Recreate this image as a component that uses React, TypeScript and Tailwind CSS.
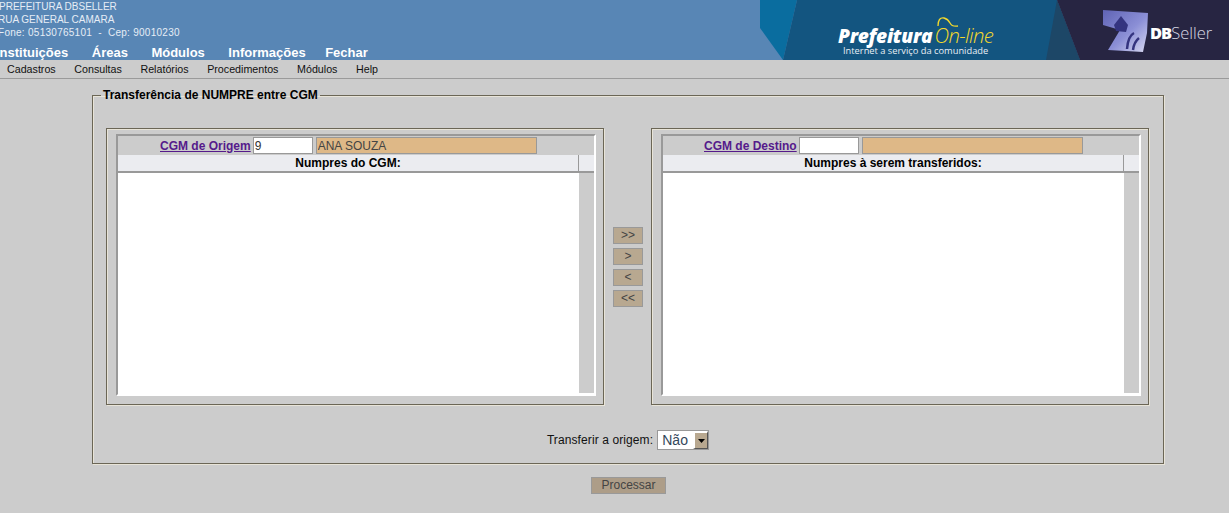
const menuTop = ['Instituições', 'Áreas', 'Módulos', 'Informações'];
const menuSub = ['Cadastros', 'Consultas', 'Relatórios', 'Procedimentos', 'Módulos', 'Help'];
const arrows = ['>>', '>', '<', '<<'];

const Banner = () => (
  <div className="relative w-[469px] h-[60px] shrink-0">
    <svg width="469" height="60" viewBox="0 0 469 60" className="absolute inset-0">
      <defs>
        <linearGradient id="dbIcon" x1="0" y1="0" x2="1" y2="1">
          <stop offset="0" stopColor="#5f63b4" />
          <stop offset="0.55" stopColor="#8b8fd6" />
          <stop offset="1" stopColor="#d9daf2" />
        </linearGradient>
      </defs>
      <polygon points="0,0 37,0 23,60 0,28" fill="#0a6d9f" />
      <polygon points="37,0 297,0 320,60 23,60" fill="#135580" />
      <polygon points="297,0 320,60 286,60" fill="#1d4767" />
      <polygon points="297,0 469,0 469,60 320,60" fill="#272542" />
      {/* DBSeller mark */}
      <polygon points="343,10 388,13 387,33 383,52 348,50 360,30 343,25" fill="url(#dbIcon)" />
      <polygon points="361,16 368,25 366,32 356,31 354,25" fill="#34347f" />
      <path d="M367 49 Q368 36 374 33 M373 50 Q374 42 379 38" stroke="#34347f" strokeWidth="2.5" fill="none" />
      {/* swoosh above the O */}
      <path d="M178 26 Q178 17 184 18 Q188 19 190 23 Q192 27 198 26" stroke="#f3d92c" strokeWidth="1.3" fill="none" />
    </svg>
    <div className="absolute left-[78px] top-[25px] flex items-baseline whitespace-nowrap">
      <span className="font-['Open_Sans',sans-serif] font-extrabold italic text-[19.2px] leading-[20px] text-white tracking-[-0.3px]">Prefeitura</span>
      <span className="ml-[2px] font-['Open_Sans',sans-serif] italic font-light text-[20.3px] leading-[20px] text-[#f3d92c] tracking-[-0.6px]">On-line</span>
    </div>
    <span className="absolute left-[83px] top-[47px] font-['Open_Sans',sans-serif] text-[9.3px] leading-[8px] text-[#e8eef4] whitespace-nowrap">Internet a serviço da comunidade</span>
    <div className="absolute left-[390px] top-[23px] flex font-['Open_Sans',sans-serif] text-[16.5px] leading-[20px] text-white whitespace-nowrap">
      <span className="font-extrabold tracking-[-1px]">DB</span>
      <span className="font-light text-[#d8d8e4]">Seller</span>
    </div>
  </div>
);

const Field = ({ value, name, nameW }: { value: string; name: string; nameW: string }) => (
  <>
    <input
      readOnly
      value={value}
      className="w-[60px] h-[17px] ml-[2px] bg-white border border-[#999] px-[1px] text-[12px] font-['Liberation_Sans',sans-serif] text-[#333] outline-none"
    />
    <input
      readOnly
      value={name}
      className={`${nameW} h-[17px] ml-[3px] bg-[#deb887] border border-[#999] px-[1px] text-[12px] font-['Liberation_Sans',sans-serif] text-[#444] outline-none`}
    />
  </>
);

const Panel = ({
  label,
  labelMl,
  value,
  name,
  nameW,
  title,
}: {
  label: string;
  labelMl: string;
  value: string;
  name: string;
  nameW: string;
  title: string;
}) => (
  <div className="w-[498px] h-[277px] border border-[#6b6656] shadow-[1px_1px_0_#e8e4d8,inset_1px_1px_0_#e8e4d8] pt-[5px] pl-[9px]">
    <div className="w-[480px] h-[262px] border-t-[2px] border-l-[2px] border-t-[#999] border-l-[#999] border-r-[2px] border-b-[2px] border-r-white border-b-white flex flex-col">
      <div className="h-[19px] flex items-center">
        <a className={`${labelMl} text-[12px] font-bold underline text-[#551a8b] whitespace-nowrap`}>{label}</a>
        <Field value={value} name={name} nameW={nameW} />
      </div>
      <div className="h-[18px] flex bg-[#ebecf0] border-b-[2px] border-[#999]">
        <div className="w-[461px] border-r border-[#999] text-center text-[12px] leading-[16px] font-bold text-black">{title}</div>
      </div>
      <div className="flex-1 flex bg-white">
        <div className="w-[461px]" />
        <div className="w-[15px] mb-[1px] bg-[#cccccc]" />
      </div>
    </div>
  </div>
);

export default function App() {
  return (
    <div className="w-[1229px] h-[513px] overflow-hidden bg-[#cccccc] font-['Liberation_Sans',sans-serif]">
      <header className="h-[60px] flex justify-between bg-[#5886b5]">
        <div className="text-white">
          <div className="text-[10px] leading-[13px] text-[#e6edf5]">
            <div className="h-[13px] -ml-[1px]">PREFEITURA DBSELLER</div>
            <div className="h-[13px] -ml-[2px]">RUA GENERAL CAMARA</div>
            <div className="h-[13px] -ml-[2px] whitespace-pre tracking-[0.27px]">Fone: 05130765101  -  Cep: 90010230</div>
          </div>
          <nav className="mt-[6px] -ml-[4px] flex gap-[23.5px] text-[13px] leading-[15px] font-bold">
            {menuTop.map((item) => (
              <span key={item}>{item}</span>
            ))}
            <span className="-ml-[4px]">Fechar</span>
          </nav>
        </div>
        <Banner />
      </header>

      <nav className="h-[19px] flex gap-[18.6px] pl-[7px] border-b border-[#9a9a9a] text-[10.7px] leading-[18px] text-[#111]">
        {menuSub.map((item, i) => (
          <span key={i}>{item}</span>
        ))}
      </nav>

      <main className="pt-[9px] pl-[92px]">
        <fieldset className="w-[1072px] h-[376px] border border-[#6b6656] shadow-[1px_1px_0_#e8e4d8,inset_1px_1px_0_#e8e4d8] px-[13px]">
          <legend className="-ml-[5px] px-[2px] text-[12px] leading-[14px] font-bold text-black">Transferência de NUMPRE entre CGM</legend>
          <div className="mt-[26px] flex">
            <Panel label="CGM de Origem" labelMl="ml-[42px]" value="9" name="ANA SOUZA" nameW="w-[221px]" title="Numpres do CGM:" />
            <div className="w-[47px] pt-[99px] pl-[9px] flex flex-col gap-[4px]">
              {arrows.map((a) => (
                <button key={a} className="w-[30px] h-[17px] bg-[#b8a890] border border-[#999] text-[12px] leading-[13px] text-[#444]">{a}</button>
              ))}
            </div>
            <Panel label="CGM de Destino" labelMl="ml-[41px]" value="" name="" nameW="w-[221px]" title="Numpres à serem transferidos:" />
          </div>
          <div className="mt-[25px] flex justify-center items-center text-[12px] tracking-[0.1px] text-[#111]">
            <span>Transferir a origem:</span>
            <div className="ml-[4px] w-[52px] h-[20px] flex border border-[#999] bg-white">
              <span className="flex-1 pl-[4px] text-[14px] leading-[18px] text-[#33475b]">Não</span>
              <span className="w-[15px] bg-[#b8a890] border-l-2 border-t-2 border-white border-r border-b border-r-[#555] border-b-[#555] flex items-center justify-center">
                <svg width="7" height="4" viewBox="0 0 7 4"><polygon points="0,0 7,0 3.5,4" fill="#000" /></svg>
              </span>
            </div>
          </div>
        </fieldset>
        <div className="mt-[8px] pl-[499px]">
          <button className="w-[75px] h-[17px] bg-[#ad9d88] border border-[#999] text-[12px] leading-[14px] text-[#444]">Processar</button>
        </div>
      </main>
    </div>
  );
}
